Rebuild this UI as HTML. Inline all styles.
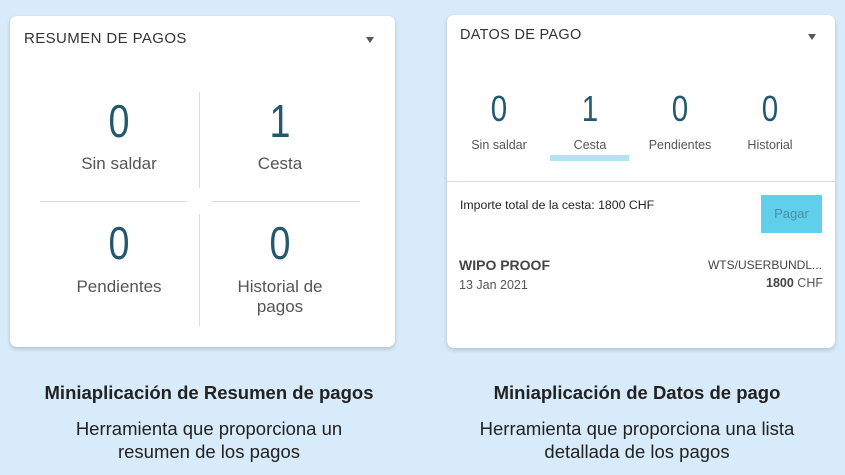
<!DOCTYPE html>
<html><head><meta charset="utf-8"><style>
*{margin:0;padding:0;box-sizing:border-box}
body{width:845px;height:475px;background:#d8ebfa;font-family:"Liberation Sans",sans-serif;position:relative;overflow:hidden;color:#333}
.card{position:absolute;background:#fff;border-radius:7px;box-shadow:0 2px 4px rgba(0,0,0,.18)}
.a{position:absolute;white-space:nowrap}
.c{transform:translateX(-50%);text-align:center}
.n{transform:translateX(-50%) scaleX(.82);text-align:center}
.num{font-size:46px;color:#23596d}
.lbl{font-size:17px;color:#555}
.lbl2{font-size:12.5px;color:#555}
.num2{font-size:36px;color:#23596d}
.vl{position:absolute;width:1px;background:#ddd}
.hl{position:absolute;height:1px;background:#ddd}
.tri{position:absolute;width:0;height:0;border-left:4px solid transparent;border-right:4px solid transparent;border-top:6px solid #555}
.cap{font-size:18.5px;color:#222}
</style></head><body>
<div class="card" style="left:10px;top:16px;width:385px;height:331px"></div>
<div class="a" style="left:24px;top:30px;font-size:15px;letter-spacing:.4px;color:#333">RESUMEN DE PAGOS</div>
<div class="tri" style="left:366px;top:37px"></div>
<div class="vl" style="left:199px;top:92px;height:96px"></div>
<div class="vl" style="left:199px;top:214px;height:112px"></div>
<div class="hl" style="left:40px;top:201px;width:147px"></div>
<div class="hl" style="left:212px;top:201px;width:148px"></div>
<div class="a n num" style="left:119px;top:94px">0</div>
<div class="a n num" style="left:280px;top:94px">1</div>
<div class="a c lbl" style="left:119px;top:154px">Sin saldar</div>
<div class="a c lbl" style="left:280px;top:154px">Cesta</div>
<div class="a n num" style="left:119px;top:216px">0</div>
<div class="a n num" style="left:280px;top:216px">0</div>
<div class="a c lbl" style="left:119px;top:277px">Pendientes</div>
<div class="a c lbl" style="left:280px;top:277px;line-height:20px">Historial de<br>pagos</div>

<div class="card" style="left:447px;top:15px;width:388px;height:333px"></div>
<div class="a" style="left:460px;top:27px;font-size:14.5px;letter-spacing:.3px;color:#333">DATOS DE PAGO</div>
<div class="tri" style="left:808px;top:34px"></div>
<div class="a n num2" style="left:499px;top:88px">0</div>
<div class="a n num2" style="left:590px;top:88px">1</div>
<div class="a n num2" style="left:680px;top:88px">0</div>
<div class="a n num2" style="left:770px;top:88px">0</div>
<div class="a c lbl2" style="left:499px;top:138px">Sin saldar</div>
<div class="a c lbl2" style="left:590px;top:138px">Cesta</div>
<div class="a c lbl2" style="left:680px;top:138px">Pendientes</div>
<div class="a c lbl2" style="left:770px;top:138px">Historial</div>
<div class="a" style="left:550px;top:155px;width:79px;height:6px;background:#b0e3f3"></div>
<div class="hl" style="left:447px;top:181px;width:388px"></div>
<div class="a" style="left:460px;top:198px;font-size:12.3px;color:#222">Importe total de la cesta: 1800 CHF</div>
<div class="a" style="left:761px;top:195px;width:61px;height:38px;background:#60cfec;color:#4a8fa3;font-size:13px;text-align:center;line-height:38px">Pagar</div>
<div class="a" style="left:459px;top:257px;font-size:14px;font-weight:bold;color:#444">WIPO PROOF</div>
<div class="a" style="left:459px;top:278px;font-size:12.5px;color:#555">13 Jan 2021</div>
<div class="a" style="right:23px;top:258px;font-size:12px;color:#444">WTS/USERBUNDL...</div>
<div class="a" style="right:22px;top:276px;font-size:12.5px;color:#555"><b style="color:#444">1800</b> CHF</div>

<div class="a c cap" style="left:209px;top:382px;font-weight:bold">Miniaplicación de Resumen de pagos</div>
<div class="a c cap" style="left:209px;top:417px;line-height:23px">Herramienta que proporciona un<br>resumen de los pagos</div>
<div class="a c cap" style="left:637px;top:382px;font-weight:bold">Miniaplicación de Datos de pago</div>
<div class="a c cap" style="left:637px;top:417px;line-height:23px">Herramienta que proporciona una lista<br>detallada de los pagos</div>
</body></html>
